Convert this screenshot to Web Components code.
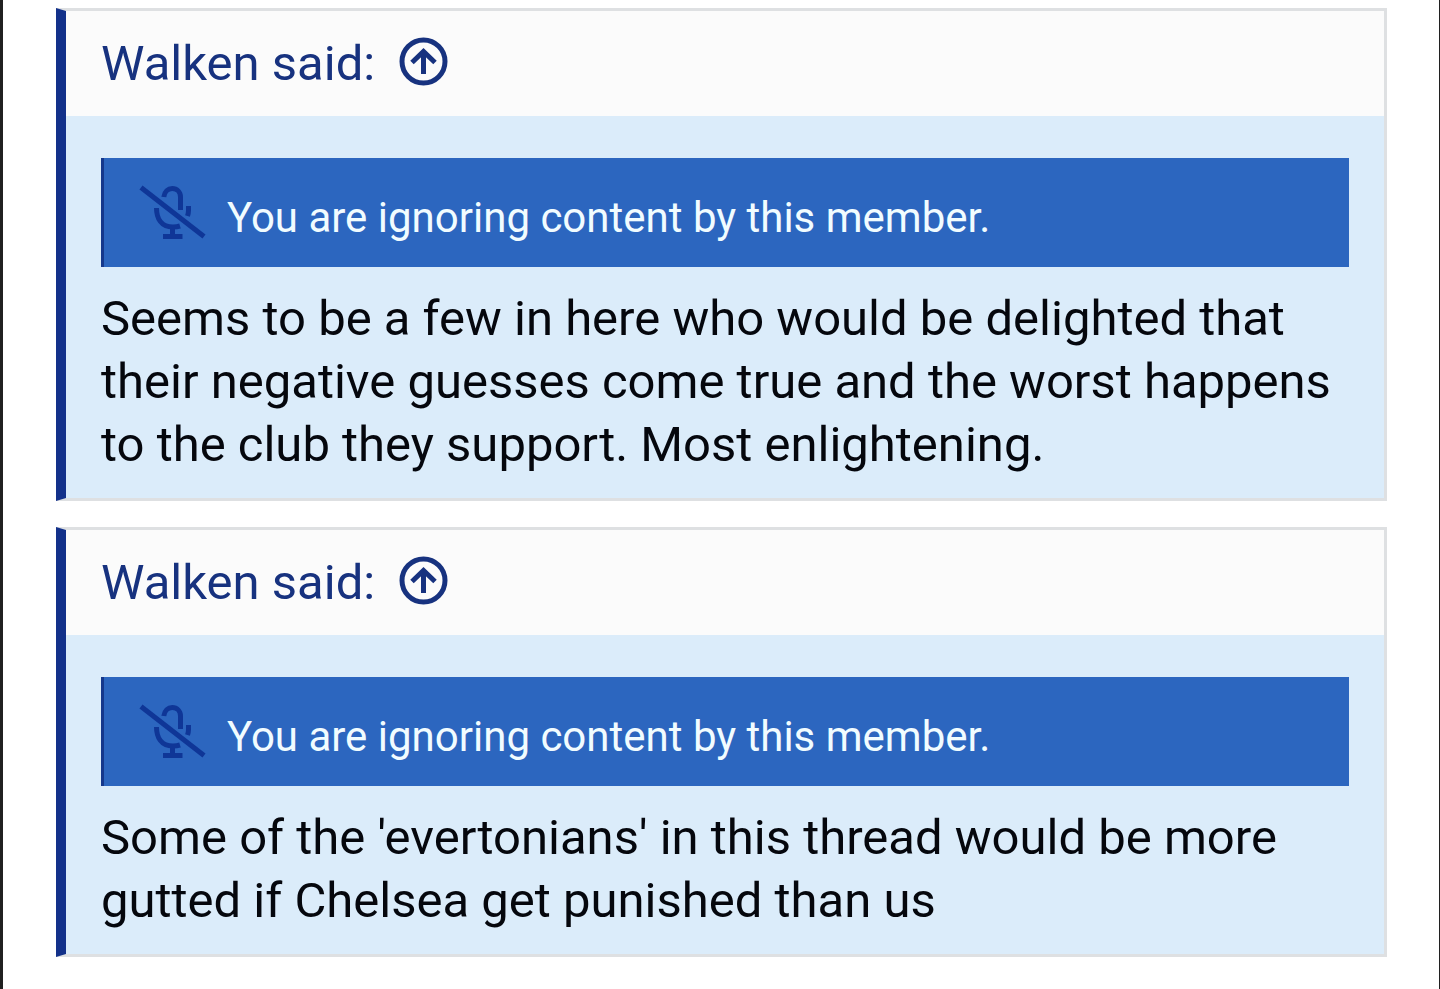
<!DOCTYPE html>
<html lang="en">
<head>
<meta charset="utf-8">
<meta name="viewport" content="width=device-width, initial-scale=1">
<title>Thread quotes</title>
<style>
  html { background: #fff; }
  body { margin: 0; font-family: Roboto, sans-serif; color: #05070d; }
</style>
</head>
<body>
<quote-thread>
  <quote-card author="Walken">Seems to be a few in here who would be delighted that their negative guesses come true and the worst happens to the club they support. Most enlightening.</quote-card>
  <quote-card author="Walken">Some of the 'evertonians' in this thread would be more gutted if Chelsea get punished than us</quote-card>
</quote-thread>

<template id="thread-template">
  <style>
    :host {
      display: flex;
      flex-direction: column;
      gap: 26px;
      box-sizing: border-box;
      min-height: 100vh;
      padding: 8px 52px 32px 53px;
      border-left: 3px solid #202020;
      border-right: 1px solid #202020;
    }
  </style>
  <slot></slot>
</template>

<template id="card-template">
  <style>
    :host {
      display: block;
      border: 3px solid #dee0e2;
      border-left: 10px solid #13318a;
      background: #dbecfa;
      font-size: 49px;
      line-height: 63px;
    }
    header {
      box-sizing: border-box;
      min-height: 105px;
      padding: 0 35px;
      display: flex;
      align-items: center;
      background: #fbfbfb;
    }
    a {
      display: inline-flex;
      align-items: center;
      gap: 24px;
      color: #17327f;
      text-decoration: none;
    }
    svg { display: block; width: 50px; height: 50px; margin-bottom: 4px; }
    .body { padding: 42px 35px 22px; }
    p { margin: 20px 0 0; }
  </style>
  <article>
    <header>
      <a href="#source"><span class="author"></span>
        <svg viewBox="0 0 50 50" fill="none" stroke="currentColor" stroke-width="5" aria-hidden="true">
          <circle cx="24.500" cy="24.500" r="21.500"/>
          <path d="M24.500 37V15M13 25.500 24.500 14.500 36 25.500"/>
        </svg>
      </a>
    </header>
    <div class="body">
      <ignore-notice>You are ignoring content by this member.</ignore-notice>
      <p><slot></slot></p>
    </div>
  </article>
</template>

<template id="notice-template">
  <style>
    :host {
      display: flex;
      align-items: center;
      gap: 20px;
      box-sizing: border-box;
      min-height: 109px;
      padding: 0 35px;
      border-left: 3px solid #15388c;
      background: #2c66bf;
      color: #f1fcff;
      font-size: 42px;
      line-height: 54px;
    }
    svg { flex: none; display: block; width: 68px; height: 56px; }
    span { padding-top: 10px; }
  </style>
  <svg viewBox="0 0 68 56" fill="none" stroke="#0f3697" stroke-width="5" aria-hidden="true">
    <path d="M2 2.500 65 51.500"/>
    <path d="M24.800 12C25.500 6.500 29 3.500 33.300 3.500C38 3.500 41.500 7 41.500 12V25"/>
    <path d="M17.500 23C17.500 33 22 42 34 42C36.500 42 38.500 41.800 41 41"/>
    <path d="M49.500 21V25.500C49.500 27.500 49 29.500 48.500 31"/>
    <path d="M33.500 42V51M24 51.500H43.500"/>
  </svg>
  <span><slot></slot></span>
</template>

<script>
  const stamp = (host, id) => {
    const root = host.attachShadow({ mode: 'open' });
    root.append(document.getElementById(id).content.cloneNode(true));
    return root;
  };

  customElements.define('ignore-notice', class extends HTMLElement {
    constructor() { super(); stamp(this, 'notice-template'); }
  });

  customElements.define('quote-card', class extends HTMLElement {
    constructor() { super(); stamp(this, 'card-template'); }
    connectedCallback() {
      this.shadowRoot.querySelector('.author').textContent = `${this.getAttribute('author')} said:`;
    }
  });

  customElements.define('quote-thread', class extends HTMLElement {
    constructor() { super(); stamp(this, 'thread-template'); }
  });
</script>
</body>
</html>
